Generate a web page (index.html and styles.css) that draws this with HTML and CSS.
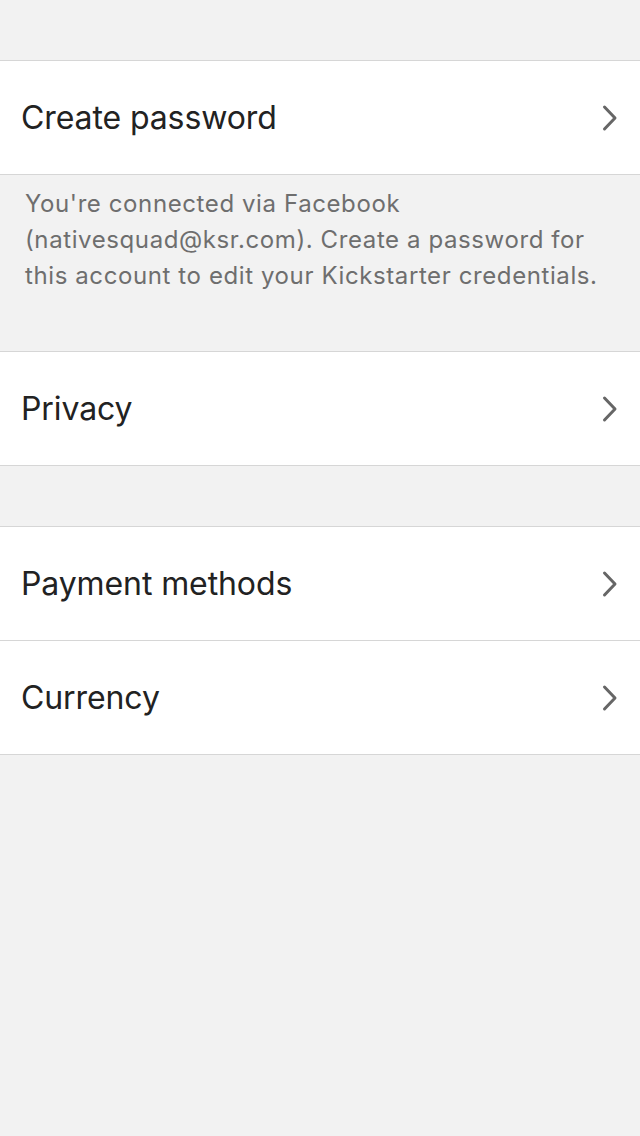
FILE: index.html
```html
<!DOCTYPE html>
<html>
<head>
<meta charset="utf-8">
<link rel="stylesheet" href="styles.css">
</head>
<body>
<div class="page">
  <div class="spacer-top"></div>
  <div class="group">
    <div class="row"><span class="label">Create password</span><svg class="chev" width="16" height="28" viewBox="0 0 16 28"><path d="M2.5 3 L13 14 L2.5 25" fill="none" stroke="#666" stroke-width="3" stroke-linecap="round" stroke-linejoin="round"/></svg></div>
  </div>
  <div class="note">You're connected via Facebook (nativesquad@ksr.com). Create a password for this account to edit your Kickstarter credentials.</div>
  <div class="group">
    <div class="row"><span class="label">Privacy</span><svg class="chev" width="16" height="28" viewBox="0 0 16 28"><path d="M2.5 3 L13 14 L2.5 25" fill="none" stroke="#666" stroke-width="3" stroke-linecap="round" stroke-linejoin="round"/></svg></div>
  </div>
  <div class="gap"></div>
  <div class="group">
    <div class="row"><span class="label">Payment methods</span><svg class="chev" width="16" height="28" viewBox="0 0 16 28"><path d="M2.5 3 L13 14 L2.5 25" fill="none" stroke="#666" stroke-width="3" stroke-linecap="round" stroke-linejoin="round"/></svg></div>
    <div class="row"><span class="label">Currency</span><svg class="chev" width="16" height="28" viewBox="0 0 16 28"><path d="M2.5 3 L13 14 L2.5 25" fill="none" stroke="#666" stroke-width="3" stroke-linecap="round" stroke-linejoin="round"/></svg></div>
  </div>
</div>
</body>
</html>
```
FILE: styles.css
```css
html, body {
  margin: 0;
  padding: 0;
  background: #f2f2f2;
}
.page {
  width: 640px;
  min-height: 1136px;
  background: #f2f2f2;
  font-family: Inter, "Liberation Sans", sans-serif;
}
.spacer-top {
  height: 60px;
}
.group {
  background: #fff;
  border-top: 1px solid #d6d6d6;
  border-bottom: 1px solid #d6d6d6;
}
.row {
  height: 113px;
  display: flex;
  align-items: center;
  justify-content: space-between;
  padding: 0 22px 0 21px;
}
.row + .row {
  border-top: 1px solid #d6d6d6;
}
.label {
  font-size: 32px;
  color: #222;
  letter-spacing: -0.1px;
}
.chev {
  display: block;
}
.note {
  height: 176px;
  box-sizing: border-box;
  padding: 11px 14px 0 25px;
  font-size: 24px;
  letter-spacing: 0.6px;
  line-height: 36px;
  color: #6e6e6e;
}
.gap {
  height: 60px;
}
```
